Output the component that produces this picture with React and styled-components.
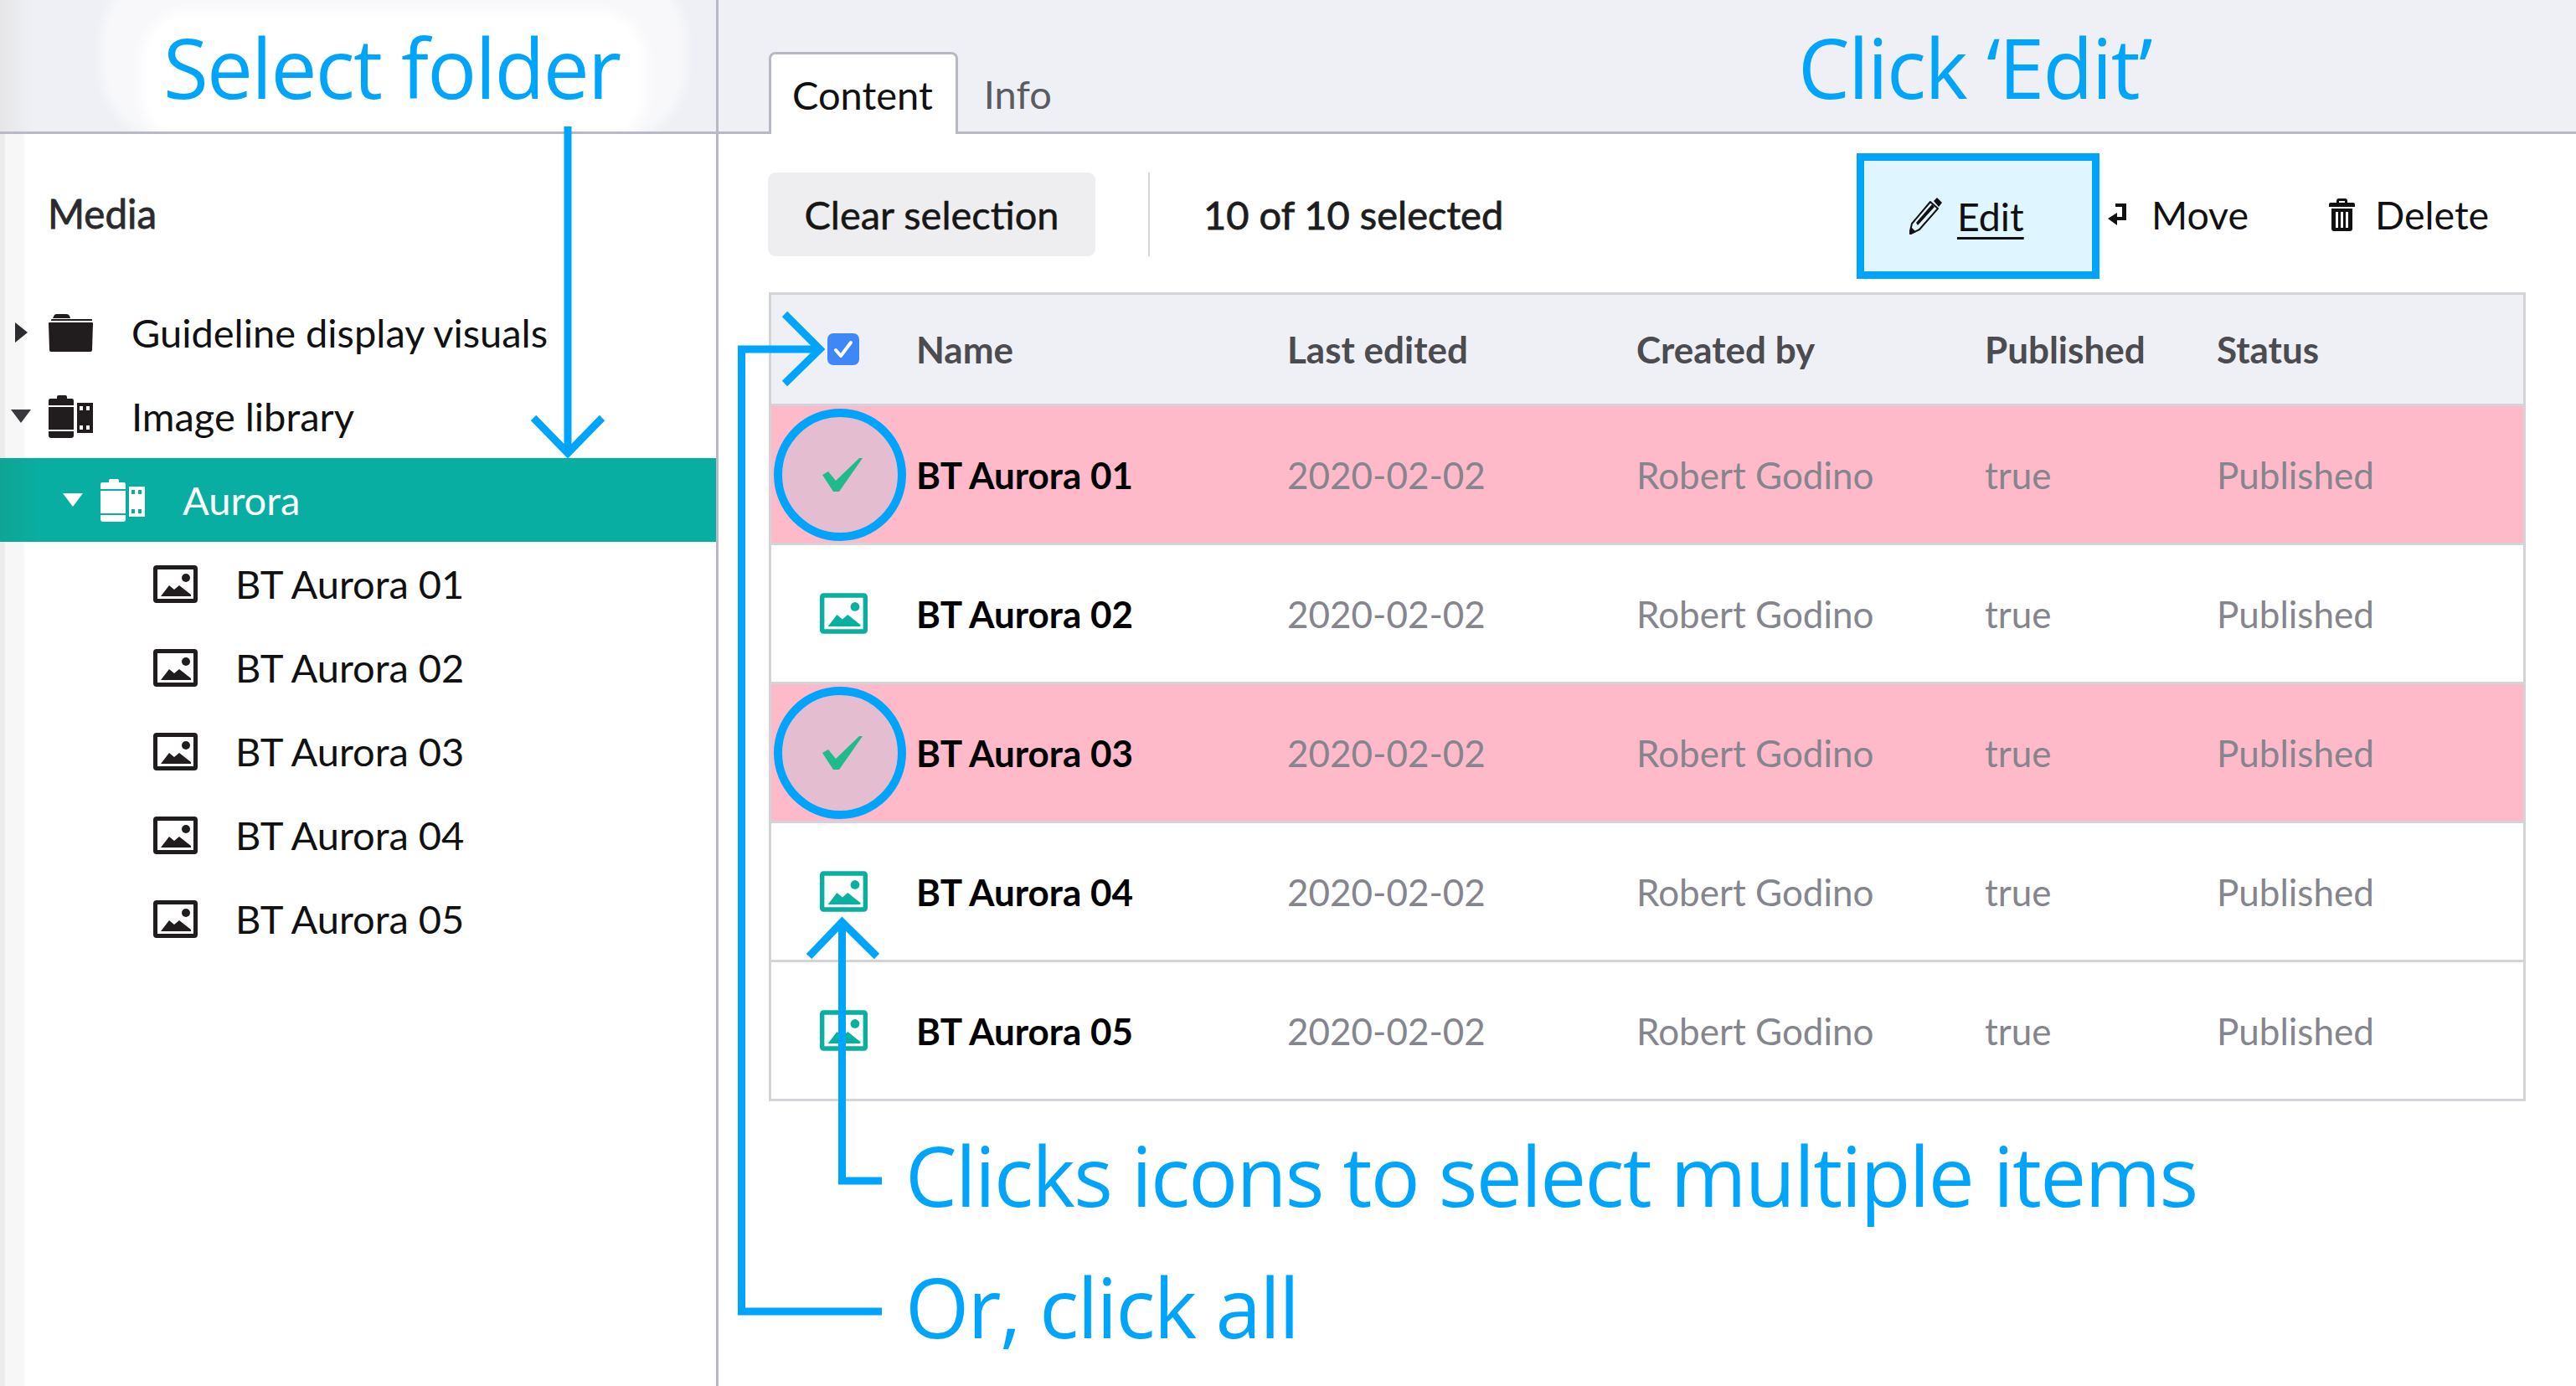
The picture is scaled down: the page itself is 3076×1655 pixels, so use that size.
import React from 'react';
import styled, { createGlobalStyle } from 'styled-components';

const accent = '#00a5fb';
const panel = '#eff0f5';
const rule = '#b9b9c6';
const tableRule = '#d3d3d8';
const teal = '#09aea3';

const GlobalStyle = createGlobalStyle`
  html, body {
    margin: 0;
    background: #fff;
    font-family: Lato, "Open Sans", sans-serif;
  }
`;

const Page = styled.div`
  position: relative;
  display: grid;
  grid-template-columns: 858px 1fr;
  width: 3076px;
  height: 1655px;
  overflow: hidden;
  background: #fff;
`;

const Sidebar = styled.aside`
  position: relative;
  border-right: 3px solid ${rule};
  background: linear-gradient(90deg, #ececec 0, #ececec 6px, #f7f7f7 6px, #f7f7f7 28px, #fff 30px);
`;

const SidebarTop = styled.div`
  position: relative;
  height: 157px;
  overflow: hidden;
  background: linear-gradient(90deg, #e6e6e8 0, ${panel} 40px);
  border-bottom: 3px solid ${rule};
`;

const GlowOuter = styled.div`
  position: absolute;
  left: 120px;
  top: -40px;
  width: 700px;
  height: 210px;
  border-radius: 90px;
  background: rgba(255, 255, 255, 0.55);
  filter: blur(6px);
`;

const GlowInner = styled.div`
  position: absolute;
  left: 168px;
  top: 12px;
  width: 604px;
  height: 160px;
  border-radius: 60px;
  background: #fff;
  filter: blur(7px);
`;

const SidebarTitle = styled.h2`
  margin: 0;
  padding: 67px 0 0 57px;
  height: 187px;
  box-sizing: border-box;
  font-size: 47.5px;
  line-height: 56px;
  font-weight: 400;
  -webkit-text-stroke: 0.8px #2b2b2e;
  color: #2b2b2e;
`;

const TreeRow = styled.div`
  display: flex;
  align-items: center;
  height: 100px;
  padding-left: ${({ $indent }) => $indent}px;
  font-size: 47px;
  color: ${({ $active }) => ($active ? '#fff' : '#111')};
  background: ${({ $active }) => ($active ? `linear-gradient(90deg, #0fa594 0, ${teal} 50px)` : 'transparent')};
`;

const CaretSlot = styled.span`
  display: flex;
  justify-content: center;
  width: 50px;
  flex: none;
  margin-right: 8px;
`;

const TreeIcon = styled.span`
  display: flex;
  flex: none;
  width: 53px;
  margin-right: ${({ $gap }) => $gap}px;
`;

const TreeLabel = styled.span`
  white-space: nowrap;
`;

const Main = styled.main`
  min-width: 0;
`;

const TabBar = styled.div`
  display: flex;
  align-items: flex-end;
  height: 157px;
  padding-left: 60px;
  background: ${panel};
  border-bottom: 3px solid ${rule};
`;

const Tab = styled.div`
  box-sizing: border-box;
  height: ${({ $active }) => ($active ? '98px' : '95px')};
  margin-bottom: ${({ $active }) => ($active ? '-3px' : '0')};
  padding: ${({ $active }) => ($active ? '20px 27px 0 25px' : '22px 27px 0 31px')};
  font-size: 47px;
  line-height: 56px;
  color: ${({ $active }) => ($active ? '#111' : '#5b5b62')};
  background: ${({ $active }) => ($active ? '#fff' : 'transparent')};
  border: ${({ $active }) => ($active ? `3px solid ${rule}` : 'none')};
  border-bottom: none;
  border-radius: 8px 8px 0 0;
`;

const Toolbar = styled.div`
  display: flex;
  align-items: center;
  height: 100px;
  margin: 46px 104px 0 59px;
`;

const ClearButton = styled.button`
  width: 391px;
  height: 100px;
  padding: 0;
  border: none;
  border-radius: 9px;
  background: #eeedf0;
  color: #161616;
  font-family: inherit;
  font-size: 47px;
  -webkit-text-stroke: 0.5px #161616;
`;

const ToolbarRule = styled.div`
  width: 2px;
  height: 100px;
  margin: 0 64px 0 63px;
  background: #d6d6da;
`;

const SelectionCount = styled.div`
  font-size: 47px;
  -webkit-text-stroke: 0.8px #1d1d20;
  color: #1d1d20;
`;

const Actions = styled.div`
  display: flex;
  align-items: center;
  margin-left: auto;
`;

const EditBox = styled.div`
  display: flex;
  align-items: center;
  box-sizing: border-box;
  width: 290px;
  height: 150px;
  margin: 4px 10px 0 0;
  padding-left: 54px;
  border: 9px solid ${accent};
  background: #dff5ff;
`;

const ActionLink = styled.span`
  margin-left: ${({ $gap }) => $gap}px;
  font-size: 46.5px;
  color: #111;
  text-decoration: ${({ $current }) => ($current ? 'underline' : 'none')};
  text-underline-offset: 7px;
  text-decoration-thickness: 3px;
`;

const ActionIcon = styled.span`
  display: flex;
  flex: none;
`;

const MoveAction = styled.div`
  display: flex;
  align-items: center;
  width: 264px;
`;

const DeleteAction = styled.div`
  display: flex;
  align-items: center;
`;

const Table = styled.div`
  box-sizing: border-box;
  width: 2098px;
  margin: 43px 0 0 60px;
  border: 3px solid ${tableRule};
`;

const Row = styled.div`
  display: grid;
  grid-template-columns: 173px 443px 417px 416px 277px 1fr;
  align-items: center;
  box-sizing: border-box;
  height: ${({ $head, $last }) => ($head ? '133px' : $last ? '163px' : '166px')};
  background: ${({ $head, $selected }) => ($head ? panel : $selected ? '#ffbaca' : '#fff')};
  border-bottom: ${({ $last }) => ($last ? 'none' : `3px solid ${tableRule}`)};
`;

const IconCell = styled.div`
  display: flex;
  justify-content: center;
  align-items: center;
  padding-right: 1px;
`;

const HeadCell = styled.div`
  font-size: 44px;
  font-weight: 700;
  color: #4b4b50;
`;

const NameCell = styled.div`
  font-size: 44px;
  font-weight: 700;
  color: #000;
  white-space: nowrap;
`;

const DataCell = styled.div`
  font-size: 44px;
  color: #85858d;
  white-space: nowrap;
`;

const HeaderCheck = styled.div`
  display: flex;
  align-items: center;
  justify-content: center;
  box-sizing: border-box;
  width: 38px;
  height: 38px;
  border-radius: 7px;
  background: #3f86f9;
`;

const SelectedMark = styled.div`
  display: flex;
  align-items: center;
  justify-content: center;
  box-sizing: border-box;
  width: 158px;
  height: 158px;
  flex: none;
  margin-right: 8px;
  padding-left: 5px;
  border-radius: 50%;
  border: 10px solid ${accent};
  background: #e5bdd0;
`;

const Overlay = styled.svg`
  position: absolute;
  left: 0;
  top: 0;
  pointer-events: none;
`;

const Callout = styled.div`
  position: absolute;
  left: ${({ $x }) => $x}px;
  top: ${({ $y }) => $y}px;
  font-family: "Open Sans", "Noto Sans", sans-serif;
  font-size: 98px;
  line-height: 130px;
  letter-spacing: -1.7px;
  color: ${accent};
  white-space: nowrap;
`;

const CaretRight = () => (
  <svg width="15" height="24" viewBox="0 0 15 24"><path d="M0 0l15 12L0 24z" fill="#2b2b30" /></svg>
);

const CaretDown = ({ color }) => (
  <svg width="24" height="16" viewBox="0 0 24 16"><path d="M0 0h24L12 16z" fill={color} /></svg>
);

const FolderIcon = () => (
  <svg width="53" height="45" viewBox="0 0 53 45" fill="#211d1e">
    <path d="M5 5l2-4q1-1 3-1h11q3 0 4 2l1 3z" />
    <path d="M4 6h47q1 0 1 1v1H3V7q0-1 1-1z" />
    <path d="M1 10h51q1 0 1 1l-1 32q0 2-2 2H3q-2 0-2-2L0 11q0-1 1-1z" />
  </svg>
);

const FilmIcon = ({ color }) => (
  <svg width="53" height="51" viewBox="0 0 53 51" fill={color}>
    <path d="M10 4V2q0-2 2-2h8q2 0 2 2v2h6q2 0 2 3v5H0V7q0-3 2-3z" />
    <rect x="0" y="14" width="30" height="27" />
    <path d="M0 43h30v5q0 3-3 3H3q-3 0-3-3z" />
    <path
      fillRule="evenodd"
      d="M34 9h19v36H34zM37 13v5h4v-5zM45 13v5h4v-5zM37 36v5h4v-5zM45 36v5h4v-5z"
    />
  </svg>
);

const ImageIcon = ({ color, w = 53, h = 45 }) => (
  <svg width={w} height={h} viewBox="0 0 53 45">
    <rect x="2.5" y="2.5" width="48" height="40" rx="1.5" fill="none" stroke={color} strokeWidth="5" />
    <circle cx="39" cy="15" r="5" fill={color} />
    <path d="M9 37l10-13 6 5 6-5 14 11v2z" fill={color} />
  </svg>
);

const PencilIcon = () => (
  <svg width="40" height="44" viewBox="0 0 40 44" fill="#111">
    <path d="M0 44l3-13L25 5l9 8L12 38z" fill="none" stroke="#111" strokeWidth="2" strokeLinejoin="round" />
    <path d="M0 44l2-9 6 6zM8 30l19-22 3 3-20 22z" />
    <path d="M29 4l4-4 6 6-4 5z" />
  </svg>
);

const MoveIcon = () => (
  <svg width="22" height="26" viewBox="0 0 22 26" fill="#111">
    <path d="M9 0h13v20H9v-4h8V4H9z" />
    <path d="M11 11v15L0 18z" />
  </svg>
);

const TrashIcon = () => (
  <svg width="31" height="39" viewBox="0 0 31 39" fill="#111">
    <path d="M9 5V3q0-3 3-3h7q3 0 3 3v2h7q2 0 2 2v3H0V7q0-2 2-2zM12 5h7V3h-7z" fillRule="evenodd" />
    <path
      fillRule="evenodd"
      d="M3 12h25v24q0 3-3 3H6q-3 0-3-3zM8 16v19h3V16zM14 16v19h3V16zM20 16v19h3V16z"
    />
  </svg>
);

const CheckIcon = () => (
  <svg width="48" height="40" viewBox="0 0 48 40">
    <path d="M0 20l7-4 9 11L44 0h4L20 40h-7z" fill="#1fbb8a" />
  </svg>
);

const SmallTick = () => (
  <svg width="24" height="22" viewBox="0 0 24 22">
    <path d="M3 12l6 7L21 3" fill="none" stroke="#fff" strokeWidth="4" strokeLinecap="round" strokeLinejoin="round" />
  </svg>
);

const assets = [
  { name: 'BT Aurora 01', selected: true },
  { name: 'BT Aurora 02', selected: false },
  { name: 'BT Aurora 03', selected: true },
  { name: 'BT Aurora 04', selected: false },
  { name: 'BT Aurora 05', selected: false },
];

const App = () => (
  <Page>
    <GlobalStyle />

    <Sidebar>
      <SidebarTop>
        <GlowOuter />
        <GlowInner />
      </SidebarTop>
      <SidebarTitle>Media</SidebarTitle>
      <TreeRow $indent={0}>
        <CaretSlot><CaretRight /></CaretSlot>
        <TreeIcon $gap={46}><FolderIcon /></TreeIcon>
        <TreeLabel>Guideline display visuals</TreeLabel>
      </TreeRow>
      <TreeRow $indent={0}>
        <CaretSlot><CaretDown color="#3a3a3e" /></CaretSlot>
        <TreeIcon $gap={46}><FilmIcon color="#211d1e" /></TreeIcon>
        <TreeLabel>Image library</TreeLabel>
      </TreeRow>
      <TreeRow $indent={62} $active>
        <CaretSlot><CaretDown color="#fff" /></CaretSlot>
        <TreeIcon $gap={45}><FilmIcon color="#fff" /></TreeIcon>
        <TreeLabel>Aurora</TreeLabel>
      </TreeRow>
      {assets.map((asset) => (
        <TreeRow $indent={183} key={asset.name}>
          <TreeIcon $gap={45}><ImageIcon color="#211d1e" /></TreeIcon>
          <TreeLabel>{asset.name}</TreeLabel>
        </TreeRow>
      ))}
    </Sidebar>

    <Main>
      <TabBar>
        <Tab $active>Content</Tab>
        <Tab>Info</Tab>
      </TabBar>

      <Toolbar>
        <ClearButton>Clear selection</ClearButton>
        <ToolbarRule />
        <SelectionCount>10 of 10 selected</SelectionCount>
        <Actions>
          <EditBox>
            <ActionIcon><PencilIcon /></ActionIcon>
            <ActionLink $gap={17} $current>Edit</ActionLink>
          </EditBox>
          <MoveAction>
            <ActionIcon><MoveIcon /></ActionIcon>
            <ActionLink $gap={30}>Move</ActionLink>
          </MoveAction>
          <DeleteAction>
            <ActionIcon><TrashIcon /></ActionIcon>
            <ActionLink $gap={24}>Delete</ActionLink>
          </DeleteAction>
        </Actions>
      </Toolbar>

      <Table>
        <Row $head>
          <IconCell><HeaderCheck><SmallTick /></HeaderCheck></IconCell>
          <HeadCell>Name</HeadCell>
          <HeadCell>Last edited</HeadCell>
          <HeadCell>Created by</HeadCell>
          <HeadCell>Published</HeadCell>
          <HeadCell>Status</HeadCell>
        </Row>
        {assets.map((asset, index) => (
          <Row key={asset.name} $selected={asset.selected} $last={index === assets.length - 1}>
            <IconCell>
              {asset.selected ? (
                <SelectedMark><CheckIcon /></SelectedMark>
              ) : (
                <ImageIcon color="#0ab09f" w={57} h={49} />
              )}
            </IconCell>
            <NameCell>{asset.name}</NameCell>
            <DataCell>2020-02-02</DataCell>
            <DataCell>Robert Godino</DataCell>
            <DataCell>true</DataCell>
            <DataCell>Published</DataCell>
          </Row>
        ))}
      </Table>
    </Main>

    <Overlay width="3076" height="1655" viewBox="0 0 3076 1655" fill="none" stroke={accent} strokeWidth="9">
      {/* select folder arrow */}
      <path d="M678 151V541" />
      <path d="M637 499L678 541L719 499" />
      {/* click all line */}
      <path d="M1053 1566H885.5V417H978" />
      <path d="M937 375L979 417L937 458" />
      {/* row icons line */}
      <path d="M1053 1410H1005.5V1103" />
      <path d="M966 1142L1005.5 1101L1047 1142" />
    </Overlay>

    <Callout $x={195} $y={15}>Select folder</Callout>
    <Callout $x={2147} $y={15}>Click ‘Edit’</Callout>
    <Callout $x={1081} $y={1338}>Clicks icons to select multiple items</Callout>
    <Callout $x={1081} $y={1495}>Or, click all</Callout>
  </Page>
);

export default App;
